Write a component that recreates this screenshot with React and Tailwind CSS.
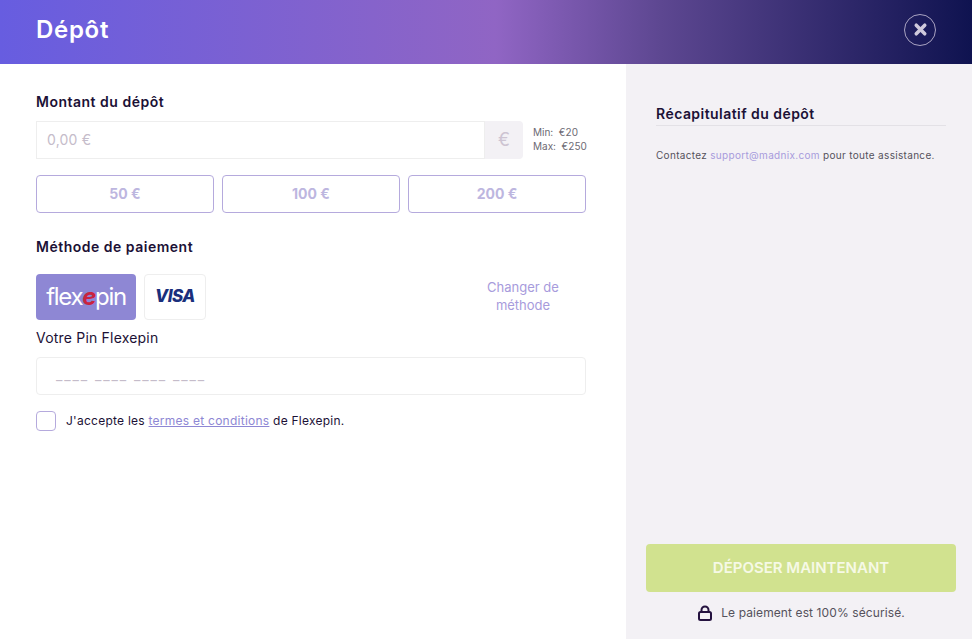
import { X } from "lucide-react";

const font = { fontFamily: '"Inter", "Liberation Sans", sans-serif' };

const presets = ["50 €", "100 €", "200 €"];

const App = () => {
  return (
    <div className="w-[972px] h-[639px] bg-white flex flex-col overflow-hidden" style={font}>
      {/* Header */}
      <header className="h-16 shrink-0 flex items-center justify-between pl-9 pr-9 pb-[5px] bg-[linear-gradient(90deg,#675de0_0%,#9065c4_51%,#5d4791_68%,#0f1350_100%)]">
        <h1 className="text-2xl font-semibold text-white tracking-[0.7px]">Dépôt</h1>
        <button className="w-8 h-8 rounded-full border border-[#a9a3c2] flex items-center justify-center">
          <X size={17} strokeWidth={5} className="text-[#cfc9dc]" />
        </button>
      </header>

      <div className="flex flex-1 min-h-0">
        {/* Left column */}
        <div className="w-[626px] pl-9 pr-10 pt-[29px]">
          <h2 className="text-sm leading-[18px] font-semibold text-[#1c1136] tracking-[0.5px]">Montant du dépôt</h2>

          <div className="flex items-center mt-[10px]">
            <div className="w-[449px] shrink-0 h-[38px] border border-[#eeeeee] flex items-center pl-[10px] text-sm tracking-[0.2px] text-[#c5bcca]">
              0,00 €
            </div>
            <div className="w-[38px] shrink-0 h-[38px] bg-[#f3f1f5] rounded-r flex items-center justify-center text-lg text-[#cdc4d2]">
              €
            </div>
            <div className="ml-[10px] pb-[2px] text-[10px] leading-[14px] text-[#6d6a73] whitespace-nowrap">
              <div>Min:&nbsp; €20</div>
              <div>Max:&nbsp; €250</div>
            </div>
          </div>

          <div className="grid grid-cols-3 gap-2 mt-4">
            {presets.map((p) => (
              <button
                key={p}
                className="h-[38px] rounded border border-[#b5aadd] text-sm font-bold text-[#bdb6df]"
              >
                {p}
              </button>
            ))}
          </div>

          <h2 className="text-sm leading-[18px] font-semibold text-[#1c1136] tracking-[0.5px] mt-[25px]">Méthode de paiement</h2>

          <div className="flex items-center mt-[18px]">
            <div className="w-[100px] h-[46px] rounded bg-[#8e87d4] flex items-center justify-center text-[24px] text-white tracking-[-1.3px]">
              flex<span className="text-[#c9243f] font-bold italic">e</span>pin
            </div>
            <div className="w-[62px] h-[46px] ml-2 rounded border border-[#eeeeee] flex items-center justify-center text-[17px] font-extrabold italic text-[#1a2f7c] tracking-[-0.5px]">
              VISA
            </div>
            <div className="ml-auto w-[126px] pb-[2px] text-center text-[13px] leading-[18px] text-[#a79bdc]">
              Changer de
              <br />
              méthode
            </div>
          </div>

          <label className="block text-sm leading-[20px] text-[#1c1136] tracking-[0.2px] mt-2">Votre Pin Flexepin</label>

          <div className="h-[38px] mt-[9px] rounded border border-[#eeeeee] flex items-center pl-[19px] pb-[2px] text-sm tracking-[1.9px] text-[#c5bcca]">
            ____ ____ ____ ____
          </div>

          <div className="flex items-center mt-4">
            <div className="w-5 h-5 rounded border border-[#b5aadd]" />
            <p className="ml-[10px] text-xs tracking-[0.25px] text-[#1c1136]">
              J'accepte les{" "}
              <span className="text-[#8e87d4] underline">termes et conditions</span> de Flexepin.
            </p>
          </div>
        </div>

        {/* Summary column */}
        <div className="flex-1 bg-[#f3f1f5] flex flex-col pl-5 pr-4 pt-[41px] pb-[18px]">
          <div className="mx-[10px]">
            <h2 className="text-sm leading-[18px] font-semibold text-[#1c1136] tracking-[0.45px] pb-[2px] border-b border-[#e3e1e6]">
              Récapitulatif du dépôt
            </h2>
            <p className="text-[10px] leading-[14px] mt-[22px] tracking-[0.32px] text-[#55525c]">
              Contactez <span className="text-[#a79bdc]">support@madnix.com</span> pour toute assistance.
            </p>
          </div>

          <div className="mt-auto">
            <button className="w-full h-12 rounded bg-[#d1e28f] text-[15px] font-semibold text-[#f6f9e6]">
              DÉPOSER MAINTENANT
            </button>
            <div className="flex items-center justify-center mt-[13px] text-xs leading-4 tracking-[0.1px] text-[#55525c]">
              <svg width="16" height="16" viewBox="0 0 16 16" fill="none" stroke="#24123f" strokeWidth="2" className="mr-2">
                <rect x="2" y="7" width="12" height="8" rx="1.5" />
                <path d="M4.5 7V5a3.5 3.5 0 0 1 7 0v2" />
              </svg>
              Le paiement est 100% sécurisé.
            </div>
          </div>
        </div>
      </div>
    </div>
  );
};

export default App;
